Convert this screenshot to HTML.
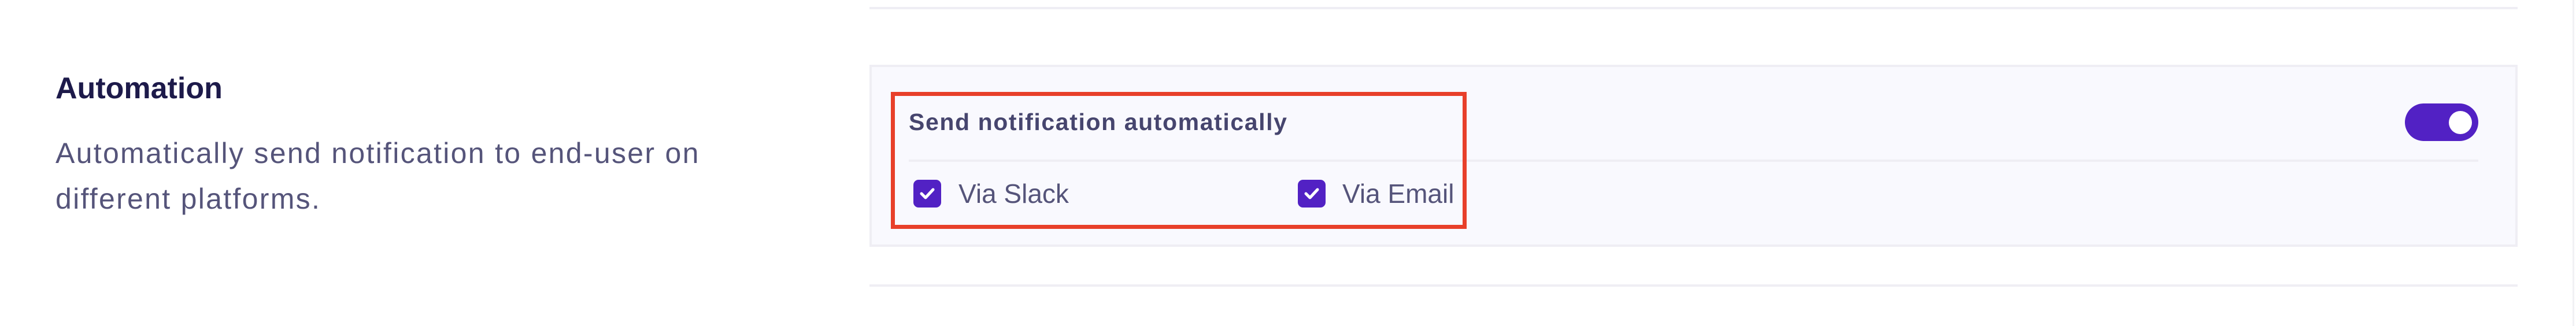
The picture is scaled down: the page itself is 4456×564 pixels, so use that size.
<!DOCTYPE html>
<html><head><meta charset="utf-8"><style>
html,body{margin:0;padding:0;width:4456px;height:564px;background:#fff;overflow:hidden;font-family:"Liberation Sans",sans-serif;position:relative}
.a{position:absolute;white-space:nowrap;line-height:1}
.line{position:absolute;background:#efeef4}
.cb{position:absolute;width:48px;height:48px;border-radius:9px;background:#5221c4}
</style></head><body>
<div class="line" style="left:1504px;top:12px;width:2851px;height:4px"></div>
<div class="line" style="left:1504px;top:492px;width:2851px;height:4px"></div>
<div class="line" style="left:4450px;top:0;width:3px;height:564px;background:#f1f1f4"></div>

<div class="a" style="left:96px;top:127px;font-size:52px;font-weight:bold;color:#1d1a4a">Automation</div>
<div class="a" style="left:96px;top:240px;font-size:50px;letter-spacing:2.3px;color:#55547a">Automatically send notification to end-user on</div>
<div class="a" style="left:96px;top:319px;font-size:50px;letter-spacing:2.3px;color:#55547a">different platforms.</div>

<div style="position:absolute;left:1504px;top:112px;width:2843px;height:307px;background:#f9f9fe;border:4px solid #efeef4"></div>
<div class="line" style="left:1572px;top:276px;width:2715px;height:4px"></div>

<div style="position:absolute;left:1541px;top:159px;width:982px;height:223px;border:7px solid #e8402a"></div>

<div class="a" style="left:1572px;top:191px;font-size:41px;letter-spacing:1.6px;font-weight:bold;color:#46456e">Send notification automatically</div>

<div class="cb" style="left:1580px;top:311px"><svg width="48" height="48" viewBox="0 0 48 48"><path d="M14 24 L21 31 L34 17" fill="none" stroke="#fff" stroke-width="5" stroke-linecap="round" stroke-linejoin="round"/></svg></div>
<div class="a" style="left:1658px;top:312px;font-size:46px;color:#55547a">Via Slack</div>
<div class="cb" style="left:2245px;top:311px"><svg width="48" height="48" viewBox="0 0 48 48"><path d="M14 24 L21 31 L34 17" fill="none" stroke="#fff" stroke-width="5" stroke-linecap="round" stroke-linejoin="round"/></svg></div>
<div class="a" style="left:2322px;top:312px;font-size:46px;color:#55547a">Via Email</div>

<div style="position:absolute;left:4160px;top:179px;width:127px;height:65px;border-radius:33px;background:#5221c4"></div>
<div style="position:absolute;left:4236px;top:192px;width:40px;height:40px;border-radius:50%;background:#fff"></div>
</body></html>
